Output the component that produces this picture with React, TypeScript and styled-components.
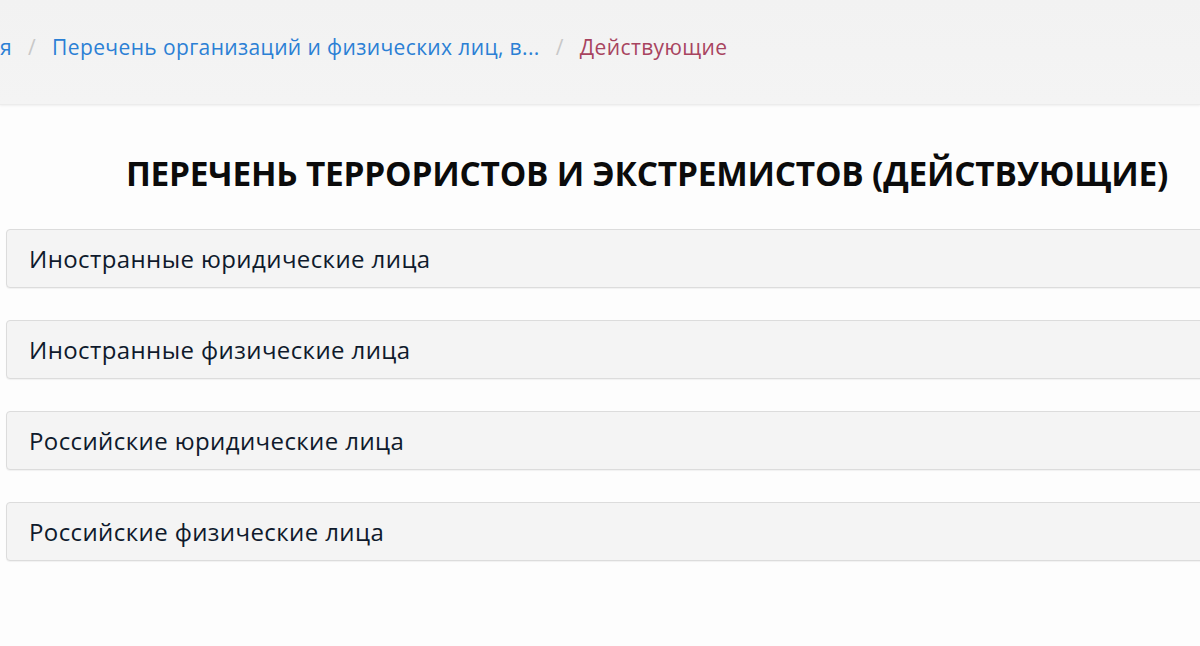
import React from "react";
import styled, { createGlobalStyle } from "styled-components";

const Global = createGlobalStyle`
  html, body { margin: 0; padding: 0; background: #ffffff; }
  body { overflow: hidden; font-family: "Open Sans", "Noto Sans", sans-serif; }
  #root { width: 1200px; height: 646px; overflow: hidden; }
`;

const Page = styled.div`
  width: 1200px;
  height: 646px;
  display: flex;
  flex-direction: column;
  background: #fdfdfd;
`;

const CrumbBar = styled.nav`
  height: 105px;
  flex: none;
  box-sizing: border-box;
  background: linear-gradient(#f2f2f2, #f4f4f4);
  box-shadow: 0 1px 2px rgba(0, 0, 0, 0.06);
  border-bottom: 1px solid #ececec;
  display: flex;
  align-items: flex-start;
  padding-top: 33px;
`;

const CrumbList = styled.ol`
  list-style: none;
  margin: 0;
  padding: 0;
  display: flex;
  align-items: center;
  font-size: 21px;
  letter-spacing: 0.38px;
  line-height: 28px;
  white-space: nowrap;
`;

const ClippedCrumb = styled.li`
  width: 12px;
  overflow: hidden;
  display: flex;
  justify-content: flex-end;
`;

const Crumb = styled.li<{ $active?: boolean }>`
  color: ${(p) => (p.$active ? "#a8445f" : "#2b80d5")};
`;

const Sep = styled.li`
  color: #c8c8c8;
  padding: 0 16px;
`;

const Main = styled.main`
  margin-right: -88px;
  padding-left: 6px;
  display: flex;
  flex-direction: column;
`;

const Title = styled.h1`
  margin: 46px 0 0;
  font-size: 33.4px;
  line-height: 44px;
  font-weight: 700;
  color: #0b0b0b;
  text-align: center;
  letter-spacing: -0.2px;
`;

const Accordion = styled.div`
  margin-top: 34px;
  display: flex;
  flex-direction: column;
  gap: 32px;
`;

const Item = styled.div`
  height: 59px;
  box-sizing: border-box;
  background: #f4f4f4;
  border: 1px solid #dcdcdc;
  border-radius: 4px;
  box-shadow: 0 1px 1px rgba(0, 0, 0, 0.05);
  display: flex;
  align-items: center;
  padding-left: 22px;
  font-size: 24px;
  letter-spacing: 0.4px;
  color: #0f1a2c;
`;

const items = [
  "Иностранные юридические лица",
  "Иностранные физические лица",
  "Российские юридические лица",
  "Российские физические лица",
];

export default function App() {
  return (
    <>
      <Global />
      <Page>
        <CrumbBar>
          <CrumbList>
            <ClippedCrumb>
              <Crumb as="span">Главная</Crumb>
            </ClippedCrumb>
            <Sep>/</Sep>
            <Crumb>Перечень организаций и физических лиц, в...</Crumb>
            <Sep>/</Sep>
            <Crumb $active>Действующие</Crumb>
          </CrumbList>
        </CrumbBar>
        <Main>
          <Title>ПЕРЕЧЕНЬ ТЕРРОРИСТОВ И ЭКСТРЕМИСТОВ (ДЕЙСТВУЮЩИЕ)</Title>
          <Accordion>
            {items.map((t) => (
              <Item key={t}>{t}</Item>
            ))}
          </Accordion>
        </Main>
      </Page>
    </>
  );
}
